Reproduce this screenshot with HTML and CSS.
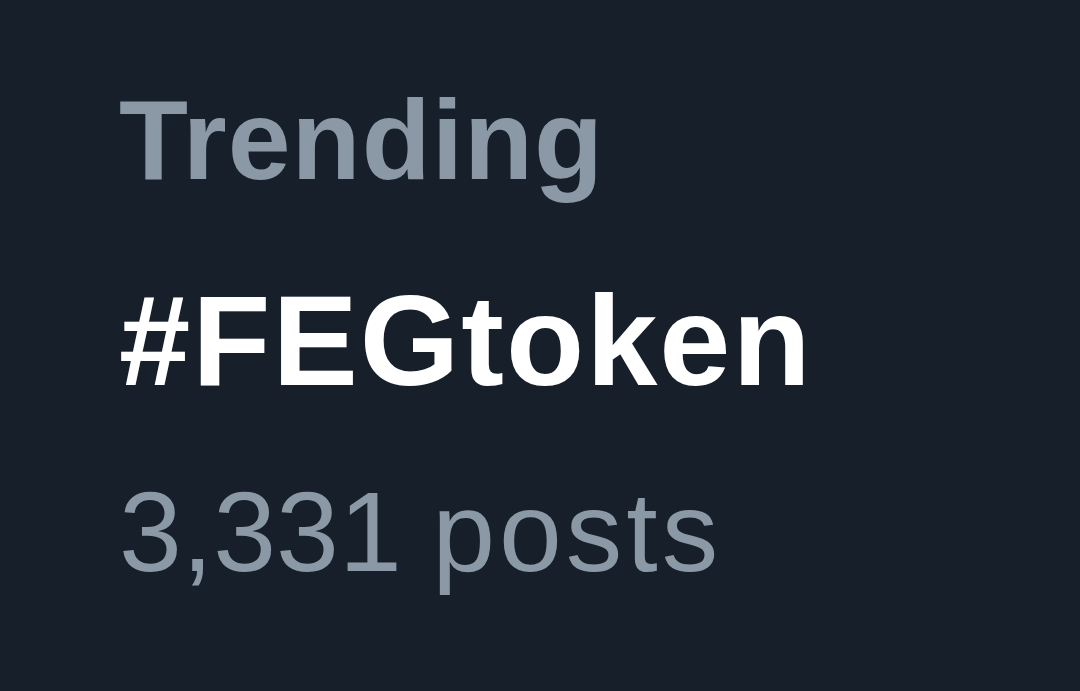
FILE: index.html
```html
<!DOCTYPE html>
<html lang="en">
<head>
  <meta charset="UTF-8">
  <meta name="viewport" content="width=device-width, initial-scale=1.0">
  <title>Trending</title>
  <link rel="stylesheet" href="styles.css">
</head>
<body>

  <!-- Trend item -->
  <div class="trend">
    <div class="trend-label">Trending</div>
    <div class="trend-tag">#FEGtoken</div>
    <div class="trend-count">3,331 <span class="trend-unit">posts</span></div>
  </div>

</body>
</html>
```

FILE: styles.css
```css
* {
  box-sizing: border-box;
}

html, body {
  margin: 0;
  padding: 0;
  width: 100%;
  height: 100%;
  background-color: #161f2a;
  font-family: 'Liberation Sans', Arial, sans-serif;
  overflow: hidden;
}

.trend {
  display: flex;
  flex-direction: column;
  padding: 84px 0 0 119px;
}

.trend-label {
  font-size: 113px;
  line-height: 1;
  font-weight: bold;
  color: #8b98a5;
  letter-spacing: 1px;
}

.trend-tag {
  margin-top: 80px;
  font-size: 128px;
  line-height: 1;
  font-weight: bold;
  color: #ffffff;
  letter-spacing: 2px;
}

.trend-count {
  margin-top: 71px;
  font-size: 113px;
  line-height: 1;
  color: #8b98a5;
  word-spacing: -1px;
}

.trend-unit {
  letter-spacing: 4px;
}
```
